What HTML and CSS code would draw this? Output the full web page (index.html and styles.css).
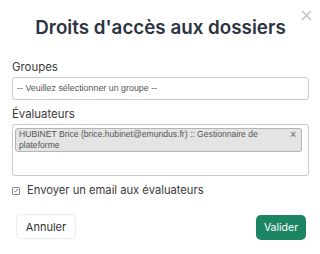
FILE: index.html
```html
<!DOCTYPE html>
<html lang="fr">
<head>
<meta charset="utf-8">
<link rel="stylesheet" href="styles.css">
</head>
<body>
<div class="dialog">
  <button class="close" aria-label="Fermer">
    <svg width="11" height="11" viewBox="0 0 11 11"><path d="M1 1L10 10M10 1L1 10" stroke="#c4c4c4" stroke-width="1.6"/></svg>
  </button>
  <h1 class="title">Droits d'accès aux dossiers</h1>
  <div class="field">
    <label class="label">Groupes</label>
    <div class="select">-- Veuillez sélectionner un groupe --</div>
  </div>
  <div class="field field-eval">
    <label class="label">Évaluateurs</label>
    <div class="multi">
      <div class="tag">
        <span class="tag-text">HUBINET Brice (brice.hubinet@emundus.fr) :: Gestionnaire de plateforme</span>
        <span class="tag-x">×</span>
      </div>
    </div>
  </div>
  <div class="check-row">
    <span class="checkbox">
      <svg width="7" height="7" viewBox="0 0 7 7"><path d="M1.3 3.6L2.9 5.1L5.8 1.6" fill="none" stroke="#555" stroke-width="1"/></svg>
    </span>
    <span class="check-label">Envoyer un email aux évaluateurs</span>
  </div>
  <div class="actions">
    <button class="btn btn-cancel">Annuler</button>
    <button class="btn btn-ok">Valider</button>
  </div>
</div>
</body>
</html>
```
FILE: styles.css
```css
* { box-sizing: border-box; }
html, body { margin: 0; padding: 0; background: #fff; }
body { font-family: Inter, "Noto Sans", sans-serif; width: 320px; height: 254px; overflow: hidden; }
.dialog { position: relative; padding: 17px 11px 0 12px; }
.close { position: absolute; top: 10px; right: 8px; border: 0; background: none; padding: 0; width: 11px; height: 11px; display: block; }
.close svg { display: block; }
.title { margin: 0; font-size: 18.8px; line-height: 22px; font-weight: 600; color: #2d3442; text-align: center; }
.field { margin-top: 21px; }
.field-eval { margin-top: 7px; }
.label { display: block; font-size: 11.4px; line-height: 15px; color: #3a3a3a; margin-bottom: 2px; }
.select { height: 23px; border: 1px solid #c9c9d6; border-radius: 3px; font-family: "Liberation Sans", Arial, sans-serif; font-size: 8.9px; line-height: 21px; color: #555; padding-left: 4px; }
.multi { height: 52px; border: 1px solid #c9c9d6; border-radius: 3px; padding: 3px 6px 0 2px; }
.tag { display: flex; justify-content: space-between; align-items: flex-start; background: #e4e4e4; border: 1px solid #b4b4b4; border-radius: 3px; padding: 0 5px 1px 3px; font-family: "Liberation Sans", Arial, sans-serif; font-size: 8.6px; line-height: 10.6px; color: #555; }
.tag-text { width: 256px; }
.tag-x { font-size: 10px; line-height: 12px; color: #888; font-weight: 700; }
.check-row { display: flex; align-items: center; margin-top: 7px; height: 15px; }
.checkbox { width: 8px; height: 8px; border: 1px solid #8a8a8a; border-radius: 1px; display: flex; align-items: center; justify-content: center; margin-right: 7px; }
.checkbox svg { display: block; }
.check-label { font-size: 11.2px; line-height: 15px; color: #3a3a3a; }
.actions { display: flex; justify-content: space-between; align-items: flex-start; margin-top: 16px; padding: 0 3px 0 4px; }
.btn { font-family: Inter, "Noto Sans", sans-serif; height: 25px; border-radius: 5px; padding: 0; font-size: 11px; }
.btn-cancel { width: 60px; background: #fff; border: 1px solid #ebebeb; color: #333; }
.btn-ok { width: 50px; margin-top: 1px; background: #1b8462; border: 0; color: #fff; font-size: 10.5px; }
```
